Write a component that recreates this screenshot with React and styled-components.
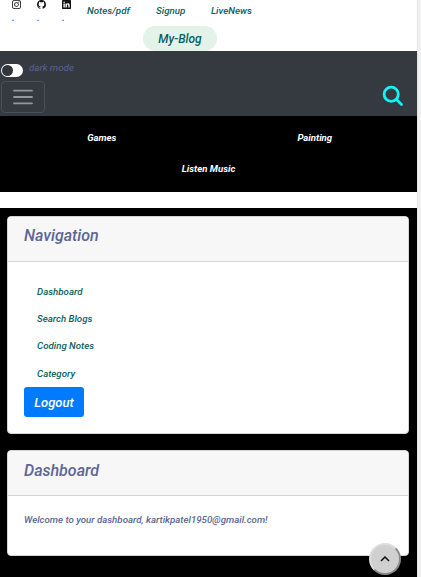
import React from "react";
import styled, { createGlobalStyle } from "styled-components";
import { BsInstagram, BsGithub, BsLinkedin } from "react-icons/bs";

const GlobalStyle = createGlobalStyle`
  *, *::before, *::after { box-sizing: border-box; }
  html { background: #f1f1f1; overflow: hidden; }
  body { margin: 0; font-family: Roboto, sans-serif; font-style: italic; color: #5c6596; }
`;

const Page = styled.div`
  width: 417px;
  height: 577px;
  overflow: hidden;
  background: #000;
  box-shadow: 1px 0 0 #e4e4e4;
`;

const TopBar = styled.header`
  height: 51px;
  background: #fff;
  display: flex;
  flex-direction: column;
`;

const TopRow = styled.div`
  display: flex;
  height: 26px;
  padding-left: 12px;
`;

const Social = styled.a`
  width: 25px;
  display: flex;
  flex-direction: column;
  color: #111;
  svg { display: block; width: 9px; height: 9px; }
`;

const Dot = styled.span`
  font-size: 10px;
  font-weight: 500;
  line-height: 12px;
  margin-top: 3px;
  color: #007bff;
`;

const TopLink = styled.a`
  width: ${(p) => p.$width}px;
  font-size: 9.75px;
  font-weight: 500;
  line-height: 22px;
  white-space: nowrap;
  color: #0b5f60;
`;

const Brand = styled.a`
  align-self: center;
  margin-right: 57px;
  width: 74px;
  height: 25px;
  border-radius: 13px;
  background: #e3f3e9;
  color: #0b5f60;
  font-size: 12px;
  font-weight: 500;
  line-height: 26px;
  text-align: center;
`;

const Toolbar = styled.nav`
  height: 65px;
  background: #343a40;
  padding: 10px 13px 0 0;
`;

const SwitchRow = styled.label`
  display: flex;
  height: 20px;
  gap: 6px;
  padding-left: 1px;
`;

const Switch = styled.span`
  width: 22px;
  height: 13px;
  margin-top: 3px;
  padding: 1px;
  border-radius: 7px;
  background: #fff;
  &::before {
    content: "";
    display: block;
    width: 11px;
    height: 11px;
    border-radius: 50%;
    background: #30353b;
  }
`;

const SwitchText = styled.span`
  font-size: 9.75px;
  line-height: 14px;
  color: #5c6596;
`;

const ToolbarRow = styled.div`
  display: flex;
  justify-content: space-between;
`;

const MenuButton = styled.button`
  width: 44px;
  height: 32px;
  margin-left: 1px;
  padding: 0;
  display: grid;
  place-items: center;
  background: transparent;
  border: 1px solid #4b5056;
  border-radius: 4px;
`;

const SearchIcon = styled.svg`
  width: 22px;
  height: 22px;
  margin-top: 4px;
`;

const Categories = styled.div`
  height: 76px;
  display: grid;
  grid-template-columns: 1fr 1fr;
  grid-template-rows: 31px 31px;
  padding-top: 7px;
  background: #000;
`;

const CategoryLink = styled.a`
  grid-column: ${(p) => (p.$wide ? "span 2" : "auto")};
  padding-right: ${(p) => p.$inset || 0}px;
  padding-left: ${(p) => p.$start || 0}px;
  color: #fff;
  font-size: 9.6px;
  font-weight: 700;
  line-height: 30px;
  text-align: center;
`;

const Strip = styled.div`
  height: 16px;
  background: #fff;
`;

const Main = styled.main`
  display: flex;
  flex-direction: column;
  gap: 16px;
  padding: 8px 8px 0 7px;
`;

const Card = styled.section`
  height: ${(p) => p.$height}px;
  border: 1px solid #d4d4d4;
  border-radius: 4px;
  background: #fff;
  overflow: hidden;
`;

const CardHeader = styled.h2`
  height: 45px;
  margin: 0;
  padding-left: 16px;
  background: #f7f7f7;
  border-bottom: 1px solid #d5d5d5;
  font-size: 16px;
  font-weight: 500;
  line-height: ${(p) => p.$line || 37}px;
`;

const NavList = styled.div`
  padding: 16px 0 0 16px;
  display: flex;
  flex-direction: column;
`;

const NavLink = styled.a`
  height: 27.2px;
  padding-left: 13px;
  color: #0b5f60;
  font-size: 9.7px;
  font-weight: 500;
  line-height: 27px;
`;

const Logout = styled.button`
  width: 60px;
  height: 30px;
  padding: 0;
  border: 0;
  border-radius: 3px;
  background: #007bff;
  color: #fff;
  font: italic 500 13px/31px Roboto, sans-serif;
`;

const Welcome = styled.p`
  margin: 16px 0 0 16px;
  font-size: 9.7px;
  font-weight: 500;
  line-height: 16px;
`;

const ScrollTop = styled.button`
  position: fixed;
  left: 369px;
  top: 543px;
  width: 32px;
  height: 32px;
  padding: 0;
  display: grid;
  place-items: center;
  border: 2px outset #dedede;
  border-radius: 50%;
  background: #d0d0d0;
`;

export default function App() {
  return (
    <>
      <GlobalStyle />
      <Page>
        <TopBar>
          <TopRow>
            <Social><BsInstagram /><Dot>.</Dot></Social>
            <Social><BsGithub /><Dot>.</Dot></Social>
            <Social><BsLinkedin /><Dot>.</Dot></Social>
            <TopLink $width={69}>Notes/pdf</TopLink>
            <TopLink $width={55}>Signup</TopLink>
            <TopLink $width={50}>LiveNews</TopLink>
          </TopRow>
          <Brand>My-Blog</Brand>
        </TopBar>
        <Toolbar>
          <SwitchRow>
            <Switch />
            <SwitchText>dark mode</SwitchText>
          </SwitchRow>
          <ToolbarRow>
            <MenuButton aria-label="Menu">
              <svg width="20" height="16" viewBox="0 0 20 16" stroke="#94989d" strokeWidth="1.8" strokeLinecap="round">
                <path d="M1 1.7h18M1 8h18M1 14.3h18" />
              </svg>
            </MenuButton>
            <SearchIcon viewBox="0 0 22 22" fill="none" stroke="#11f4f4" strokeWidth="2.8" strokeLinecap="round">
              <circle cx="9.2" cy="9.3" r="7.1" />
              <path d="M14.5 14.6l5 5" />
            </SearchIcon>
          </ToolbarRow>
        </Toolbar>
        <Categories>
          <CategoryLink $inset={5}>Games</CategoryLink>
          <CategoryLink $start={4}>Painting</CategoryLink>
          <CategoryLink $wide>Listen Music</CategoryLink>
        </Categories>
        <Strip />
        <Main>
          <Card $height={218}>
            <CardHeader>Navigation</CardHeader>
            <NavList>
              <NavLink>Dashboard</NavLink>
              <NavLink>Search Blogs</NavLink>
              <NavLink>Coding Notes</NavLink>
              <NavLink>Category</NavLink>
              <Logout>Logout</Logout>
            </NavList>
          </Card>
          <Card $height={106}>
            <CardHeader $line={39}>Dashboard</CardHeader>
            <Welcome>Welcome to your dashboard, kartikpatel1950@gmail.com!</Welcome>
          </Card>
        </Main>
        <ScrollTop aria-label="Back to top">
          <svg width="10" height="6" viewBox="0 0 10 6" fill="none" stroke="#111" strokeWidth="1.5">
            <path d="M1 5l4-4 4 4" />
          </svg>
        </ScrollTop>
      </Page>
    </>
  );
}
